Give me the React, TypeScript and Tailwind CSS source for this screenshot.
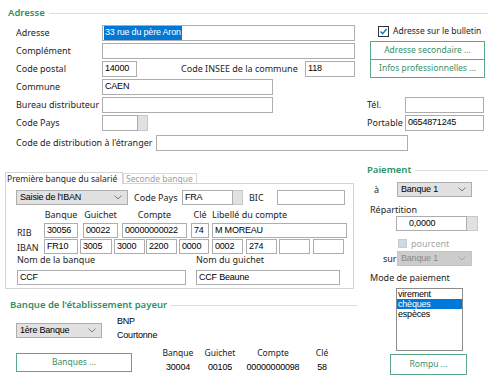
import React from "react";

const LABEL = "text-[9px] text-[#1e1e1e] whitespace-nowrap";
const VALUE = "font-['Liberation_Sans',Arial,sans-serif] text-[9px] tracking-[-0.2px] text-black whitespace-nowrap";

function Title({ text, className = "" }: { text: string; className?: string }) {
  return (
    <div className={`flex items-center h-[12px] ${className}`}>
      <span className="font-semibold text-[9.5px] text-[#2f9065] whitespace-nowrap">{text}</span>
      <div className="ml-[4px] h-px flex-1 bg-[#dddddd]" />
    </div>
  );
}

function Field({ w, value = "", h = "h-[16px]", className = "" }: { w: string; value?: string; h?: string; className?: string }) {
  return (
    <div className={`${w} ${h} shrink-0 border border-[#adadad] bg-white pl-[2px] flex items-center overflow-hidden ${VALUE} ${className}`}>
      {value}
    </div>
  );
}

function Dots() {
  return <div className="w-[10px] h-full shrink-0 border border-l-0 border-[#c8c8c8] bg-[#e1e1e1]" />;
}

function Chevron({ color = "#7a7a7a" }: { color?: string }) {
  return (
    <svg width="8" height="5" viewBox="0 0 8 5" fill="none">
      <polyline points="0.5,0.5 4,4 7.5,0.5" stroke={color} strokeWidth="1" />
    </svg>
  );
}

function Combo({ w, value, disabled = false }: { w: string; value: string; disabled?: boolean }) {
  return (
    <div
      className={`${w} h-[15px] shrink-0 flex items-center justify-between border pl-[3px] pr-[5px] ${VALUE} ${
        disabled ? "border-[#c4c4c4] bg-[#cccccc] text-[#8a8a8a]" : "border-[#adadad] bg-[#e1e1e1]"
      }`}
    >
      <span className={disabled ? "text-[#8a8a8a]" : ""}>{value}</span>
      <Chevron color={disabled ? "#a8a8a8" : "#7a7a7a"} />
    </div>
  );
}

function GreenButton({ label, className }: { label: string; className: string }) {
  return (
    <div className={`flex items-center justify-center border border-[#5aa888] bg-white text-[8.5px] text-[#3a8f6a] whitespace-nowrap ${className}`}>
      {label}
    </div>
  );
}

function Row({ label, children }: { label: string; children: React.ReactNode }) {
  return (
    <div className="flex items-start h-[18px]">
      <span className={`${LABEL} w-[86px] h-[16px] flex items-center`}>{label}</span>
      {children}
    </div>
  );
}

const ibanCells = [
  { v: "FR10", c: "w-[34px]" },
  { v: "3005", c: "w-[32px] ml-[2px]" },
  { v: "3000", c: "w-[31px] ml-[2px]" },
  { v: "2200", c: "w-[31px] ml-[1px]" },
  { v: "0000", c: "w-[30px] ml-[2px]" },
  { v: "0002", c: "w-[31px] ml-[3px]" },
  { v: "274", c: "w-[31px] ml-[3px]" },
  { v: "", c: "w-[31px] ml-[2px]" },
  { v: "", c: "w-[31px] ml-[3px]" },
];

export default function App() {
  return (
    <div className="w-[488px] h-[392px] overflow-hidden bg-white font-['Noto_Sans',sans-serif] pt-[7px]">
      {/* Adresse */}
      <Title text="Adresse" className="ml-[8px]" />
      <div className="flex mt-[6px]">
        <div className="w-[367px] pl-[16px]">
          <Row label="Adresse">
            <div className={`w-[253px] h-[16px] border border-[#adadad] pl-[1px] flex items-center ${VALUE}`}>
              <span className="bg-[#0078d7] text-white px-[1px]">33 rue du père Aron</span>
            </div>
          </Row>
          <Row label="Complément">
            <Field w="w-[253px]" />
          </Row>
          <Row label="Code postal">
            <Field w="w-[35px]" value="14000" />
            <span className={`${LABEL} ml-[44px] w-[124px] h-[16px] flex items-center`}>Code INSEE de la commune</span>
            <Field w="w-[50px]" value="118" />
          </Row>
          <Row label="Commune">
            <Field w="w-[171px]" value="CAEN" />
          </Row>
          <Row label="Bureau distributeur">
            <Field w="w-[171px]" />
          </Row>
          <Row label="Code Pays">
            <div className="flex h-[16px]">
              <Field w="w-[36px]" />
              <Dots />
            </div>
          </Row>
        </div>

        <div className="flex-1">
          <div className="flex items-center h-[12px] pl-[11px]">
            <div className="w-[11px] h-[11px] border border-[#333333] bg-white flex items-center justify-center">
              <svg width="9" height="9" viewBox="0 0 9 9" fill="none">
                <polyline points="1.5,4.5 3.6,6.6 7.6,2" stroke="#0078d7" strokeWidth="1.4" />
              </svg>
            </div>
            <span className="ml-[4px] text-[8.5px] text-[#1e1e1e] whitespace-nowrap">Adresse sur le bulletin</span>
          </div>
          <div className="ml-[3px] mt-[4px] w-[115px]">
            <GreenButton label="Adresse secondaire ..." className="h-[19px]" />
            <GreenButton label="Infos professionnelles ..." className="h-[18px] border-t-0" />
          </div>
          <div className="flex items-center h-[16px] mt-[19px]">
            <span className={`${LABEL} w-[38px]`}>Tél.</span>
            <Field w="w-[79px]" />
          </div>
          <div className="flex items-center h-[16px] mt-[2px]">
            <span className={`${LABEL} w-[38px]`}>Portable</span>
            <Field w="w-[79px]" value="0654871245" />
          </div>
        </div>
      </div>
      <div className="flex items-center h-[16px] mt-[2px] pl-[16px]">
        <span className={`${LABEL} w-[140px]`}>Code de distribution à l'étranger</span>
        <Field w="w-[252px]" />
      </div>

      {/* Banques + Paiement */}
      <div className="flex mt-[13px]">
        <div className="w-[367px] shrink-0 pl-[5px]">
          <div className="flex items-end h-[11px] mt-[8px]">
            <div className="relative z-10 h-[12px] -mb-px w-[118px] border border-b-0 border-[#d4d4d4] bg-white pl-[1px] text-[8.5px] leading-[11px] text-[#1e1e1e] whitespace-nowrap">
              Première banque du salarié
            </div>
            <div className="h-[10px] w-[74px] border border-b-0 border-[#d9d9d9] pl-[2px] text-[8.5px] leading-[9px] text-[#a0a0a0] whitespace-nowrap">
              Seconde banque
            </div>
          </div>
          <div className="w-[349px] h-[106px] border border-[#d4d4d4] pt-[6px]">
            <div className="flex items-center h-[15px]">
              <div className="ml-[10px]">
                <Combo w="w-[112px]" value="Saisie de l'IBAN" />
              </div>
              <span className={`${LABEL} ml-[6px] w-[48px]`}>Code Pays</span>
              <div className="flex h-[15px]">
                <Field w="w-[51px]" h="h-[15px]" value="FRA" />
                <Dots />
              </div>
              <span className={`${LABEL} ml-[6px] w-[28px]`}>BIC</span>
              <Field w="w-[68px]" h="h-[15px]" />
            </div>

            <div className="flex items-center h-[11px] mt-[4px] ml-[11px]">
              <span className="w-[27px]" />
              <span className={`${LABEL} w-[34px] text-center`}>Banque</span>
              <span className={`${LABEL} w-[35px] ml-[5px] text-center`}>Guichet</span>
              <span className={`${LABEL} w-[65px] ml-[4px] text-center`}>Compte</span>
              <span className={`${LABEL} w-[18px] ml-[4px] text-center`}>Clé</span>
              <span className={`${LABEL} ml-[3px]`}>Libellé du compte</span>
            </div>

            <div className="flex items-center h-[15px] mt-[3px] ml-[11px]">
              <span className={`${LABEL} w-[27px] pt-[4px] text-[8.5px]`}>RIB</span>
              <Field w="w-[34px]" h="h-[15px]" value="30056" />
              <Field w="w-[35px]" h="h-[15px]" value="00022" className="ml-[5px]" />
              <Field w="w-[65px]" h="h-[15px]" value="00000000022" className="ml-[4px]" />
              <Field w="w-[18px]" h="h-[15px]" value="74" className="ml-[4px]" />
              <Field w="w-[135px]" h="h-[15px]" value="M MOREAU" className="ml-[3px]" />
            </div>
            <div className="flex items-center h-[15px] mt-[1px] ml-[11px]">
              <span className={`${LABEL} w-[27px] pt-[2px] text-[8px]`}>IBAN</span>
              {ibanCells.map((c, i) => (
                <Field key={i} w={c.c} h="h-[15px]" value={c.v} />
              ))}
            </div>

            <div className="flex items-center h-[11px] ml-[11px]">
              <span className={`${LABEL} w-[179px]`}>Nom de la banque</span>
              <span className={LABEL}>Nom du guichet</span>
            </div>
            <div className="flex items-center h-[15px] mt-[5px] ml-[11px]">
              <Field w="w-[169px]" h="h-[15px]" value="CCF" />
              <Field w="w-[144px]" h="h-[15px]" value="CCF Beaune" className="ml-[10px]" />
            </div>
          </div>

          <Title text="Banque de l'établissement payeur" className="mt-[10px] ml-[5px] w-[347px]" />
          <div className="flex items-start mt-[3px]">
            <div className="ml-[11px] mt-[9px]">
              <Combo w="w-[86px]" value="1ère Banque" />
            </div>
            <div className={`ml-[15px] ${VALUE} text-[9.5px] leading-[14px] text-[#222]`}>
              <div>BNP</div>
              <div>Courtonne</div>
            </div>
          </div>
          <div className="flex items-start">
            <GreenButton label="Banques ..." className="ml-[11px] mt-[11px] w-[116px] h-[19px]" />
            <div className="flex mt-[4px] ml-[26px] text-[8.5px] leading-[14px] text-[#222]">
              <div className="w-[40px] text-center">
                <div>Banque</div>
                <div className={VALUE}>30004</div>
              </div>
              <div className="w-[40px] ml-[2px] text-center">
                <div>Guichet</div>
                <div className={VALUE}>00105</div>
              </div>
              <div className="w-[60px] ml-[3px] text-center">
                <div>Compte</div>
                <div className={VALUE}>00000000098</div>
              </div>
              <div className="w-[24px] ml-[7px] text-center">
                <div>Clé</div>
                <div className={VALUE}>58</div>
              </div>
            </div>
          </div>
        </div>

        {/* Paiement */}
        <div className="flex-1">
          <Title text="Paiement" />
          <div className="flex items-center h-[15px] mt-[6px] pl-[7px]">
            <span className={`${LABEL} w-[23px]`}>à</span>
            <Combo w="w-[75px]" value="Banque 1" />
          </div>
          <div className={`${LABEL} h-[11px] flex items-center mt-[7px] pl-[3px]`}>Répartition</div>
          <div className="flex h-[15px] mt-[1px] ml-[29px]">
            <Field w="w-[71px]" h="h-[15px]" value="0,0000" className="pl-[12px]" />
            <div className="w-[11px] h-full border border-l-0 border-[#c8c8c8] bg-[#e1e1e1]" />
          </div>
          <div className="flex items-center h-[10px] mt-[7px] ml-[31px]">
            <div className="w-[9px] h-[9px] bg-[#cfd9e3] border border-[#c2ccd6]" />
            <span className="ml-[4px] text-[9px] leading-none text-[#a6a6a6]">pourcent</span>
          </div>
          <div className="flex items-center h-[15px] mt-[3px] pl-[16px]">
            <span className={`${LABEL} w-[14px]`}>sur</span>
            <Combo w="w-[75px]" value="Banque 1" disabled />
          </div>
          <div className={`${LABEL} h-[11px] flex items-center mt-[6px] pl-[3px]`}>Mode de paiement</div>
          <div className={`ml-[29px] mt-[5px] w-[67px] h-[63px] border border-[#8c8c8c] bg-white ${VALUE} leading-[10px]`}>
            <div className="pl-[1px]">virement</div>
            <div className="pl-[1px] bg-[#0078d7] text-white">chèques</div>
            <div className="pl-[1px]">espèces</div>
          </div>
          <GreenButton label="Rompu ..." className="ml-[23px] mt-[3px] w-[77px] h-[21px]" />
        </div>
      </div>
    </div>
  );
}
